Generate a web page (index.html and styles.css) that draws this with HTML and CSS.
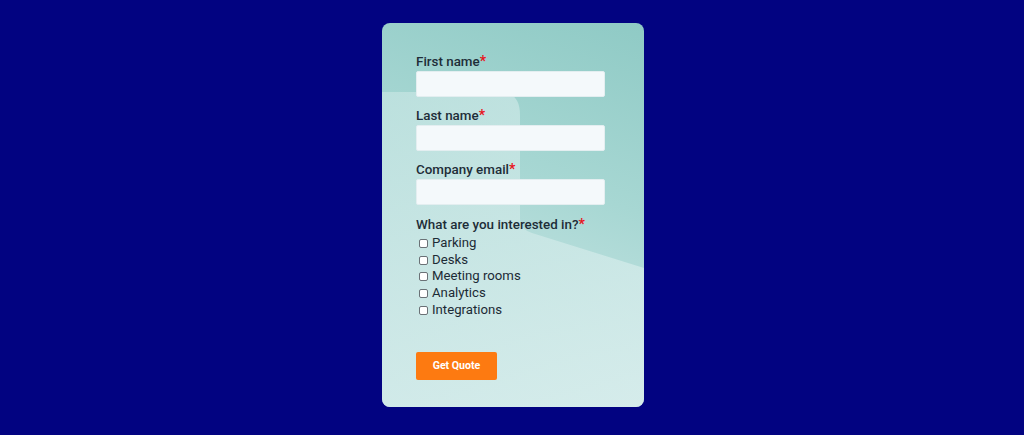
FILE: index.html
```html
<!DOCTYPE html>
<html>
<head>
<meta charset="utf-8">
<link rel="stylesheet" href="styles.css">
</head>
<body>
<div class="page">
  <form class="card">
    <svg class="deco" viewBox="0 0 262 384" preserveAspectRatio="none" aria-hidden="true">
      <defs>
        <linearGradient id="dg" x1="0" y1="0" x2="1" y2="1">
          <stop offset="0" stop-color="#c4e4e2"/>
          <stop offset="1" stop-color="#d9eeed"/>
        </linearGradient>
      </defs>
      <path d="M0 69 L118 69 Q138 69 138 92 L138 196 Q138 206 150 210 L262 245 L262 384 L0 384 Z" fill="url(#dg)" opacity="0.75"/>
    </svg>
    <div class="field">
      <label class="lbl">First name<span class="req">*</span></label>
      <input class="inp" type="text">
    </div>
    <div class="field">
      <label class="lbl">Last name<span class="req">*</span></label>
      <input class="inp" type="text">
    </div>
    <div class="field">
      <label class="lbl">Company email<span class="req">*</span></label>
      <input class="inp" type="text">
    </div>
    <div class="field field-q">
      <label class="lbl">What are you interested in?<span class="req">*</span></label>
      <ul class="opts">
        <li class="opt"><span class="box"></span>Parking</li>
        <li class="opt"><span class="box"></span>Desks</li>
        <li class="opt"><span class="box"></span>Meeting rooms</li>
        <li class="opt"><span class="box"></span>Analytics</li>
        <li class="opt"><span class="box"></span>Integrations</li>
      </ul>
    </div>
    <button class="btn" type="button">Get Quote</button>
  </form>
</div>
</body>
</html>
```
FILE: styles.css
```css
html, body {
  margin: 0;
  padding: 0;
  background: #020381;
  font-family: Roboto, "Liberation Sans", sans-serif;
}
.page {
  width: 1024px;
  height: 435px;
  display: flex;
  justify-content: center;
  align-items: flex-start;
  padding-top: 23px;
  box-sizing: border-box;
}
.card {
  position: relative;
  width: 262px;
  height: 384px;
  margin-left: 2px;
  box-sizing: border-box;
  border-radius: 8px;
  overflow: hidden;
  padding: 30px 39px 0 34px;
  background: linear-gradient(200deg, #8fcac5 0%, #a7d7d3 40%, #c6e4e3 75%, #d6ecec 100%);
  display: flex;
  flex-direction: column;
}
.deco {
  position: absolute;
  left: 0;
  top: 0;
  width: 100%;
  height: 100%;
  z-index: 0;
}
.field, .btn {
  position: relative;
  z-index: 1;
}
.field {
  display: flex;
  flex-direction: column;
  margin-bottom: 10px;
}
.field-q {
  margin-top: 1px;
}
.lbl {
  font-size: 13.4px;
  line-height: 17px;
  font-weight: 500;
  color: #1e2d38;
  margin-bottom: 1px;
}
.req {
  color: #e8141c;
  font-weight: 700;
  font-size: 14px;
}
.inp {
  width: 189px;
  height: 26px;
  box-sizing: border-box;
  border: 1px solid #e3eef0;
  border-radius: 2px;
  background: #f4f9fb;
  margin: 0;
  padding: 0 6px;
  outline: none;
}
.opts {
  list-style: none;
  margin: 1px 0 0 0;
  padding: 0;
}
.opt {
  display: flex;
  align-items: center;
  font-size: 13.2px;
  line-height: 16.7px;
  color: #1c2a35;
  padding-left: 3px;
}
.box {
  width: 7px;
  height: 7px;
  border: 1px solid #6a7176;
  border-radius: 2px;
  background: #fff;
  margin-right: 4px;
  flex: none;
}
.btn {
  align-self: flex-start;
  margin-top: 23px;
  width: 81px;
  height: 28px;
  border: none;
  border-radius: 2px;
  background: #fd7a11;
  color: #fff;
  font-family: Roboto, "Liberation Sans", sans-serif;
  font-weight: 700;
  font-size: 10.6px;
  padding: 0;
}
```
